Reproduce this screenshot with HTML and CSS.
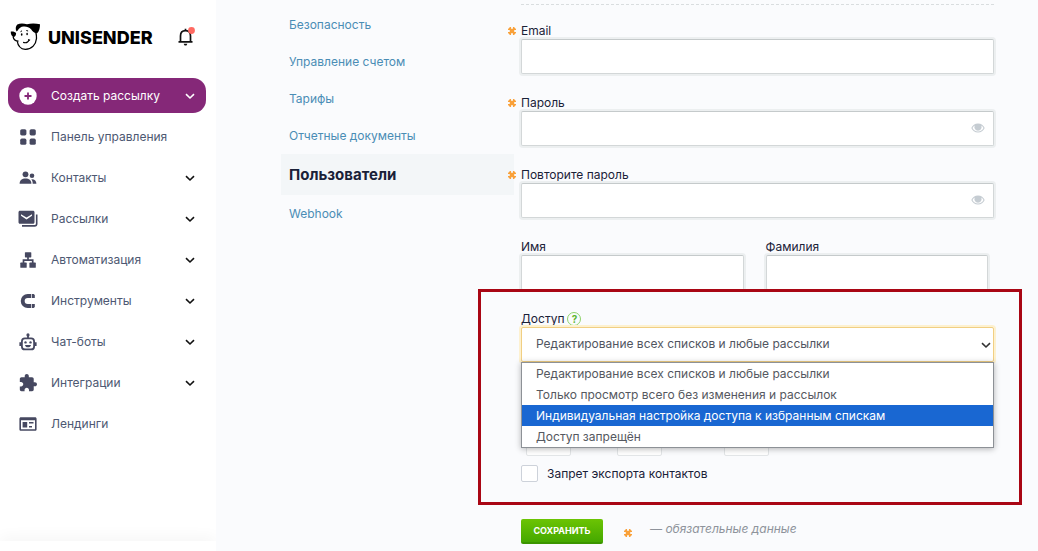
FILE: index.html
```html
<!DOCTYPE html>
<html lang="ru">
<head>
<meta charset="utf-8">
<meta name="viewport" content="width=device-width, initial-scale=1">
<title>Unisender — Пользователи</title>
<link rel="stylesheet" href="styles.css">
</head>
<body>
<svg class="sprite" aria-hidden="true">
  <symbol id="chevron" viewBox="0 0 10 10"><path d="M1 3.200 5 7 9 3.200" fill="none" stroke="currentColor" stroke-width="1.600"/></symbol>
  <symbol id="eye" viewBox="0 0 14 10"><path fill="currentColor" fill-rule="evenodd" d="M7 .5C3.900.5 1.400 2.500.300 5 1.400 7.500 3.900 9.500 7 9.500S12.600 7.500 13.700 5C12.600 2.500 10.100.5 7 .5ZM7 8.500C4.500 8.500 2.500 7.100 1.500 5 2 3.900 2.800 3 3.800 2.400A3.600 3.600 0 1 0 10.200 2.400C11.200 3 12 3.900 12.500 5 11.500 7.100 9.500 8.500 7 8.500Z"/></symbol>
  <symbol id="star" viewBox="0 0 10 10"><path d="M3.400 1V9M6.600 1V9M1 3.400H9M1 6.600H9M2 2 8 8M8 2 2 8" fill="none" stroke="currentColor" stroke-width="1.300"/></symbol>
</svg>

<div class="layout">
  <aside class="sidebar">
    <header class="brand">
      <a class="logo" href="#">
        <svg class="logo-dog" viewBox="0 0 30 28" aria-hidden="true">
          <path d="M6.800 1.500C9.500 .200 13 .300 16.500 1.300 20.500 0 25.500.300 29.500 1.200 29.500 4.500 28.900 8 26.600 10.300 23.800 10 21.800 8.500 20.600 6.200 18.800 4.500 16.500 3.800 14 3.500 11 3 8.800 4.800 7 7.800L6 8.500C4.800 6 5 3.200 6.800 1.500Z"/>
          <path d="M.3 8.600C2.300 8.200 4.600 8.800 5.600 10 5.600 12 4.600 13.600 3.200 14.300 1.200 13.400 0 11.200.3 8.600Z"/>
          <path d="M2.600 13.600C3 16.200 4.800 18 8 18.100M6.700 18C7.400 22.800 10.500 26 14.800 26.400 21.500 26.200 25.400 21.500 26 15.500 26.100 13.500 25.900 11.600 25.400 9.500" fill="none" stroke="#000" stroke-width="1.300"/>
          <path d="M12.600 19.400C15.300 20.200 17.700 19.200 18.600 17M17.600 16.400 19.600 17.300" fill="none" stroke="#000" stroke-width="1.100"/>
          <path d="M10 8.700 11.500 7.800M15.800 7.500 17.600 8" fill="none" stroke="#000"/>
          <ellipse cx="11.200" cy="11.500" rx=".8" ry="1.200"/><ellipse cx="16.600" cy="11" rx=".8" ry="1.200"/>
        </svg>
        <span class="logo-text">UNISENDER</span>
      </a>
      <button class="bell" type="button" aria-label="Уведомления">
        <svg viewBox="0 0 20 20" aria-hidden="true">
          <path d="M1.500 14.800H15.500M3.500 14.500V9C3.500 5.700 5.500 3.700 8.500 3.700S13.500 5.700 13.500 9V14.500M8.500 3.500V1.800" fill="none" stroke="#111" stroke-width="1.700"/>
          <path d="M6.700 16.700H10.300C10 18.100 9.400 18.500 8.500 18.500S7 18.100 6.700 16.700Z" fill="#111"/>
          <circle cx="14.500" cy="3.500" r="3.400" fill="#ff6a62"/>
        </svg>
      </button>
    </header>

    <nav class="menu">
      <button class="menu-item menu-item-primary" type="button">
        <svg class="icon" viewBox="0 0 18 18" aria-hidden="true"><circle cx="9" cy="9" r="8.700" fill="#fff"/><path d="M9 5.500V12.500M5.500 9H12.500" stroke="#852878" stroke-width="1.800"/></svg>
        <span>Создать рассылку</span>
        <svg class="chevron"><use href="#chevron"/></svg>
      </button>
      <a class="menu-item" href="#">
        <svg class="icon" viewBox="0 0 18 18" aria-hidden="true"><rect x="1.200" y="1.200" width="6.200" height="6.200" rx="1.600"/><rect x="10.600" y="1.200" width="6.200" height="6.200" rx="1.600"/><rect x="1.200" y="10.600" width="6.200" height="6.200" rx="1.600"/><rect x="10.600" y="10.600" width="6.200" height="6.200" rx="1.600"/></svg>
        <span>Панель управления</span>
      </a>
      <button class="menu-item" type="button">
        <svg class="icon" viewBox="0 0 18 18" aria-hidden="true"><circle cx="6.500" cy="5.300" r="2.900"/><path d="M.6 14.800C.6 11.500 3 9.600 6.500 9.600S12.400 11.500 12.400 14.800Z"/><circle cx="13" cy="6.800" r="2.300"/><path d="M12.700 10.200C15.900 10.200 17.400 12 17.400 14.800H13.700C13.700 12.800 13.300 11.400 12.300 10.300Z"/></svg>
        <span>Контакты</span>
        <svg class="chevron"><use href="#chevron"/></svg>
      </button>
      <button class="menu-item" type="button">
        <svg class="icon" viewBox="0 0 18 18" aria-hidden="true"><path fill-rule="evenodd" d="M1 .8H14C14.900.8 15.500 1.400 15.500 2.300V12.200C15.500 13.100 14.900 13.700 14 13.700H1C.1 13.700-.5 13.100-.5 12.200V2.300C-.5 1.400.1.8 1 .8ZM2 4.200V5.800L7.500 9.400 13 5.800V4.200L7.500 7.600Z"/><path d="M17.700 4.500V13.800C17.700 15.200 16.900 15.900 15.600 15.900H3" fill="none" stroke="currentColor" stroke-width="1.600"/></svg>
        <span>Рассылки</span>
        <svg class="chevron"><use href="#chevron"/></svg>
      </button>
      <button class="menu-item" type="button">
        <svg class="icon" viewBox="0 0 18 18" aria-hidden="true"><rect x="5.900" y="1.200" width="6.400" height="5.200" rx=".6"/><rect x="1.300" y="11.600" width="6.400" height="5.200" rx=".6"/><rect x="10.400" y="11.600" width="6.400" height="5.200" rx=".6"/><path d="M9 6V9M4.500 12V9.200H13.700V12" fill="none" stroke="currentColor" stroke-width="1.700"/></svg>
        <span>Автоматизация</span>
        <svg class="chevron"><use href="#chevron"/></svg>
      </button>
      <button class="menu-item" type="button">
        <svg class="icon" viewBox="0 0 18 18" aria-hidden="true"><path d="M12 4H8.700A5 5 0 0 0 8.700 14H12" fill="none" stroke="currentColor" stroke-width="3.900"/><path d="M12.700 2.050H14.700L15.800 3V5.950H12.700ZM12.700 12.050H15.800V15L14.700 15.950H12.700Z"/></svg>
        <span>Инструменты</span>
        <svg class="chevron"><use href="#chevron"/></svg>
      </button>
      <button class="menu-item" type="button">
        <svg class="icon" viewBox="0 0 18 18" aria-hidden="true"><rect x="2.900" y="5.400" width="12.200" height="11" rx="3" fill="none" stroke="currentColor" stroke-width="1.800"/><path d="M8.100 5V2.800H9.900V5ZM.4 9.200H2.500V13H.4ZM15.500 9.200H17.600V13H15.500ZM6 12H12C11.700 13.800 10.700 14.300 9 14.300S6.300 13.800 6 12Z"/><circle cx="9" cy="1.900" r="1.600"/><circle cx="6.500" cy="9.400" r="1.200"/><circle cx="11.500" cy="9.400" r="1.200"/></svg>
        <span>Чат-боты</span>
        <svg class="chevron"><use href="#chevron"/></svg>
      </button>
      <button class="menu-item" type="button">
        <svg class="icon" viewBox="1 1 22 22" aria-hidden="true"><path d="M20.500 11H19V7c0-1.100-.9-2-2-2h-4V3.500C13 2.120 11.880 1 10.500 1S8 2.120 8 3.500V5H4c-1.100 0-1.990.9-1.990 2v3.800H3.500c1.490 0 2.700 1.210 2.700 2.700s-1.210 2.700-2.700 2.700H2V20c0 1.100.9 2 2 2h3.800v-1.500c0-1.490 1.210-2.700 2.700-2.700s2.700 1.210 2.700 2.700V22H17c1.100 0 2-.9 2-2v-4h1.500c1.380 0 2.500-1.120 2.500-2.500S21.880 11 20.500 11z"/></svg>
        <span>Интеграции</span>
        <svg class="chevron"><use href="#chevron"/></svg>
      </button>
      <a class="menu-item" href="#">
        <svg class="icon" viewBox="0 0 18 18" aria-hidden="true"><path fill-rule="evenodd" d="M2 2.300H16C17 2.300 17.600 2.900 17.600 3.900V14.200C17.600 15.200 17 15.800 16 15.800H2C1 15.800.4 15.200.4 14.200V3.900C.4 2.900 1 2.300 2 2.300ZM2 5.300V14.200H16V5.300ZM3.600 7H8.200V12.500H3.600ZM10 7H14.500V8.500H10ZM10 11H13V12.500H10Z"/></svg>
        <span>Лендинги</span>
      </a>
    </nav>
    <div class="sidebar-foot"></div>
  </aside>

  <main class="content">
    <nav class="tabs">
      <a class="tab" href="#">Безопасность</a>
      <a class="tab" href="#">Управление счетом</a>
      <a class="tab" href="#">Тарифы</a>
      <a class="tab" href="#">Отчетные документы</a>
      <a class="tab tab-active" href="#" aria-current="page">Пользователи</a>
      <a class="tab" href="#">Webhook</a>
    </nav>

    <form class="form">
      <div class="field">
        <label class="label" for="email"><svg class="star star-label" aria-hidden="true"><use href="#star"/></svg>Email</label>
        <input class="input" id="email" type="email">
      </div>
      <div class="field">
        <label class="label" for="password"><svg class="star star-label" aria-hidden="true"><use href="#star"/></svg>Пароль</label>
        <div class="control">
          <input class="input" id="password" type="password">
          <button class="reveal" type="button" aria-label="Показать пароль"><svg><use href="#eye"/></svg></button>
        </div>
      </div>
      <div class="field">
        <label class="label" for="password2"><svg class="star star-label" aria-hidden="true"><use href="#star"/></svg>Повторите пароль</label>
        <div class="control">
          <input class="input" id="password2" type="password">
          <button class="reveal" type="button" aria-label="Показать пароль"><svg><use href="#eye"/></svg></button>
        </div>
      </div>
      <div class="names">
        <div class="field">
          <label class="label" for="first-name">Имя</label>
          <input class="input" id="first-name" type="text">
        </div>
        <div class="field">
          <label class="label" for="last-name">Фамилия</label>
          <input class="input" id="last-name" type="text">
        </div>
      </div>

      <section class="access">
        <div class="access-head">
          <label class="label" for="access">Доступ</label>
          <button class="help" type="button" aria-label="Справка">?</button>
        </div>
        <div class="control">
          <select class="input select" id="access">
            <option>Редактирование всех списков и любые рассылки</option>
          </select>
          <svg class="select-arrow" aria-hidden="true"><use href="#chevron"/></svg>
          <ul class="options" role="listbox" aria-label="Доступ">
            <li class="option" role="option">Редактирование всех списков и любые рассылки</li>
            <li class="option" role="option">Только просмотр всего без изменения и рассылок</li>
            <li class="option option-active" role="option" aria-selected="true">Индивидуальная настройка доступа к избранным спискам</li>
            <li class="option" role="option">Доступ запрещён</li>
          </ul>
        </div>
        <div class="limits">
          <input class="limit" type="text" aria-label="День">
          <input class="limit" type="text" aria-label="Месяц">
          <input class="limit limit-last" type="text" aria-label="Год">
        </div>
        <label class="check"><input class="checkbox" type="checkbox">Запрет экспорта контактов</label>
      </section>

      <div class="actions">
        <button class="save" type="submit">Сохранить</button>
        <svg class="star star-note" aria-hidden="true"><use href="#star"/></svg>
        <em class="note">— обязательные данные</em>
      </div>
    </form>
  </main>
</div>
</body>
</html>
```
FILE: styles.css
```css
* {
  box-sizing: border-box;
}

body {
  margin: 0;
  background: #fafbfd;
  color: #1a2138;
  font-family: Inter, "Liberation Sans", sans-serif;
  font-size: 12px;
}

button,
input,
select {
  margin: 0;
  font: inherit;
}

button {
  padding: 0;
  border: 0;
  background: none;
  color: inherit;
  cursor: pointer;
}

a {
  color: inherit;
  text-decoration: none;
}

.sprite {
  position: absolute;
  width: 0;
  height: 0;
}

.layout {
  display: flex;
  min-height: 100vh;
}

/* Sidebar */
.sidebar {
  display: flex;
  flex-direction: column;
  flex: 0 0 216px;
  background: #fff;
  overflow: hidden;
}

.brand {
  display: flex;
  align-items: center;
  justify-content: space-between;
  padding: 22px 19px 0 10px;
  height: 52px;
}

.logo {
  display: flex;
  align-items: center;
  gap: 7px;
  color: #000;
}

.logo-dog {
  width: 31px;
  height: 28px;
}

.logo-text {
  font-size: 18px;
  font-weight: 800;
}

.bell svg {
  display: block;
  width: 20px;
  height: 20px;
}

.menu {
  display: flex;
  flex-direction: column;
  gap: 6px;
  padding: 26px 10px 0 8px;
}

.menu-item {
  display: grid;
  grid-template-columns: 18px 1fr 10px;
  align-items: center;
  column-gap: 14px;
  height: 35px;
  padding: 0 11px;
  border-radius: 13px;
  color: #4d5872;
  text-align: left;
}

.menu-item-primary {
  background: #852878;
  color: #fff;
}

.icon {
  width: 18px;
  height: 18px;
  overflow: visible;
  color: #464860;
  fill: currentColor;
}

.chevron {
  width: 10px;
  height: 10px;
  color: #111;
}

.menu-item-primary .chevron {
  color: #fff;
}

.sidebar-foot {
  height: 10px;
  margin-top: auto;
  background: #fff;
  box-shadow: 0 -2px 16px rgba(0, 0, 0, 0.06);
}

/* Page */
.content {
  display: flex;
  flex: 1;
  gap: 7px;
  min-width: 0;
  padding: 4px 44px 0 65px;
}

.tabs {
  display: flex;
  flex-direction: column;
  flex: 0 0 233px;
  padding-top: 2px;
}

.tab {
  padding: 0 8px;
  line-height: 37px;
  color: #4a8db5;
}

.tab-active {
  background: #f3f6f8;
  color: #1a2138;
  font-size: 15px;
  font-weight: 700;
  line-height: 41px;
}

/* Form */
.form {
  flex: 1;
  min-width: 0;
  padding-top: 17px;
  border-top: 1px dashed #d9dddf;
}

.field {
  margin-bottom: 20px;
}

.label {
  display: block;
  position: relative;
  height: 17px;
  line-height: 17px;
}

.star {
  width: 10px;
  height: 10px;
  color: #f9a13a;
}

.star-label {
  position: absolute;
  top: 4px;
  right: 100%;
  margin-right: 4px;
}

.control {
  position: relative;
}

.input {
  display: block;
  width: 100%;
  height: 35px;
  padding: 0 14px;
  border: 1px solid #d3d7d8;
  border-top-color: #c5cacb;
  border-radius: 2px;
  background: #fff;
  box-shadow: 0 0 0 2px #eceff0;
  outline: 0;
}

.reveal {
  position: absolute;
  top: 12px;
  right: 9px;
  color: #c5ccd2;
}

.reveal svg {
  display: block;
  width: 14px;
  height: 10px;
}

.names {
  display: grid;
  grid-template-columns: 1fr 1fr;
  gap: 22px;
  padding-right: 6px;
}

.names .field {
  margin-bottom: 0;
}

.access {
  position: relative;
  margin: -1px -28px 0 -43px;
  padding: 18px 25px 20px 40px;
  border: 3px solid #a90614;
  background: #fafbfd;
}

.access-head {
  display: flex;
  gap: 3px;
  height: 17px;
}

.help {
  width: 14px;
  height: 14px;
  margin-top: 2px;
  border: 1px solid #8fd36a;
  border-radius: 50%;
  color: #5cb52f;
  font-size: 10px;
  font-weight: 700;
  line-height: 12px;
}

.select {
  padding-bottom: 2px;
  border-color: #f1cf83;
  box-shadow: 0 0 0 2px #fdf1d0;
  color: #51555f;
  appearance: none;
}

.select-arrow {
  position: absolute;
  top: 13px;
  right: 3px;
  width: 10px;
  height: 10px;
  color: #333;
}

.options {
  position: absolute;
  top: 100%;
  left: 0;
  right: 0;
  z-index: 1;
  margin: 0;
  padding: 0;
  border: 1px solid #8d9196;
  background: #fff;
  box-shadow: 0 1px 6px rgba(0, 0, 0, 0.3);
  list-style: none;
}

.option {
  padding: 0 14px;
  color: #555860;
  line-height: 21px;
}

.option-active {
  background: #1967d2;
  color: #fff;
}

.limits {
  display: flex;
  gap: 46px;
  padding: 68px 5px 9px;
}

.limit {
  width: 45px;
  height: 26px;
  border: 1px solid #e3e6e8;
  border-radius: 2px;
  background: #fff;
}

.limit-last {
  margin-left: 16px;
}

.check {
  display: flex;
  align-items: center;
  gap: 9px;
}

.checkbox {
  width: 17px;
  height: 17px;
  border: 1px solid #cdd2da;
  border-radius: 2px;
  background: #fff;
  appearance: none;
}

.actions {
  display: flex;
  align-items: flex-start;
  padding: 14px 0 6px;
}

.save {
  width: 82px;
  height: 25px;
  border-bottom: 2px solid #3b9500;
  border-radius: 2px;
  background: linear-gradient(#6cc404, #45a800);
  color: #fff;
  font-size: 9px;
  font-weight: 700;
  text-transform: uppercase;
}

.star-note {
  margin: 9px 17px 0 20px;
}

.note {
  color: #8e939b;
  line-height: 20px;
}
```
